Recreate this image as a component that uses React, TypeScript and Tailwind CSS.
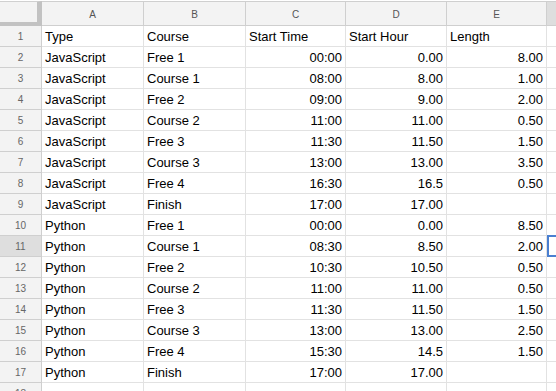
import React from 'react'

const rows: string[][] = [
  ['Type', 'Course', 'Start Time', 'Start Hour', 'Length'],
  ['JavaScript', 'Free 1', '00:00', '0.00', '8.00'],
  ['JavaScript', 'Course 1', '08:00', '8.00', '1.00'],
  ['JavaScript', 'Free 2', '09:00', '9.00', '2.00'],
  ['JavaScript', 'Course 2', '11:00', '11.00', '0.50'],
  ['JavaScript', 'Free 3', '11:30', '11.50', '1.50'],
  ['JavaScript', 'Course 3', '13:00', '13.00', '3.50'],
  ['JavaScript', 'Free 4', '16:30', '16.5', '0.50'],
  ['JavaScript', 'Finish', '17:00', '17.00', ''],
  ['Python', 'Free 1', '00:00', '0.00', '8.50'],
  ['Python', 'Course 1', '08:30', '8.50', '2.00'],
  ['Python', 'Free 2', '10:30', '10.50', '0.50'],
  ['Python', 'Course 2', '11:00', '11.00', '0.50'],
  ['Python', 'Free 3', '11:30', '11.50', '1.50'],
  ['Python', 'Course 3', '13:00', '13.00', '2.50'],
  ['Python', 'Free 4', '15:30', '14.5', '1.50'],
  ['Python', 'Finish', '17:00', '17.00', ''],
  ['', '', '', '', ''],
]

const letters = ['A', 'B', 'C', 'D', 'E']

export default function App() {
  return (
    <div className="h-[391px] w-[556px] overflow-hidden bg-white pt-px font-['Liberation_Sans',Arial,sans-serif]">
      <div className="grid grid-cols-[42px_102px_102px_100px_101px_100px_1fr]">
        {/* header */}
        <div className="h-[25px] border-t border-t-[#d0d0d0] border-r-[5px] border-b-[4px] border-[#c2c2c2] bg-[#f3f3f3]" />
        {letters.map((l) => (
          <div
            key={l}
            className="flex h-[25px] items-center justify-center border-t border-r border-b border-[#cfcfcf] bg-[#f3f3f3] pt-px text-[10px] text-[#555]"
          >
            {l}
          </div>
        ))}
        <div className="h-[25px] border-t border-b border-[#cfcfcf] bg-[#dedede]" />

        {rows.map((r, i) => {
          const n = i + 1
          const sel = n === 11
          return (
            <React.Fragment key={n}>
              <div
                className={`flex h-[21px] items-center justify-center border-r border-b border-[#cfcfcf] pt-px text-[10px] text-[#666] ${
                  sel ? 'bg-[#dedede]' : 'bg-[#f3f3f3]'
                }`}
              >
                {n}
              </div>
              {r.map((c, j) => (
                <div
                  key={j}
                  className={`flex h-[21px] items-center overflow-hidden whitespace-nowrap border-r border-b border-[#e2e2e2] px-[3px] pt-px text-[13px] text-black ${
                    j >= 2 && n !== 1 ? 'justify-end' : 'justify-start'
                  }`}
                >
                  {c}
                </div>
              ))}
              <div className="relative h-[21px] border-b border-[#e2e2e2]">
                {sel && <div className="absolute -top-px left-0 h-[22px] w-[20px] border-2 border-[#4a7fd0]" />}
              </div>
            </React.Fragment>
          )
        })}
      </div>
    </div>
  )
}
